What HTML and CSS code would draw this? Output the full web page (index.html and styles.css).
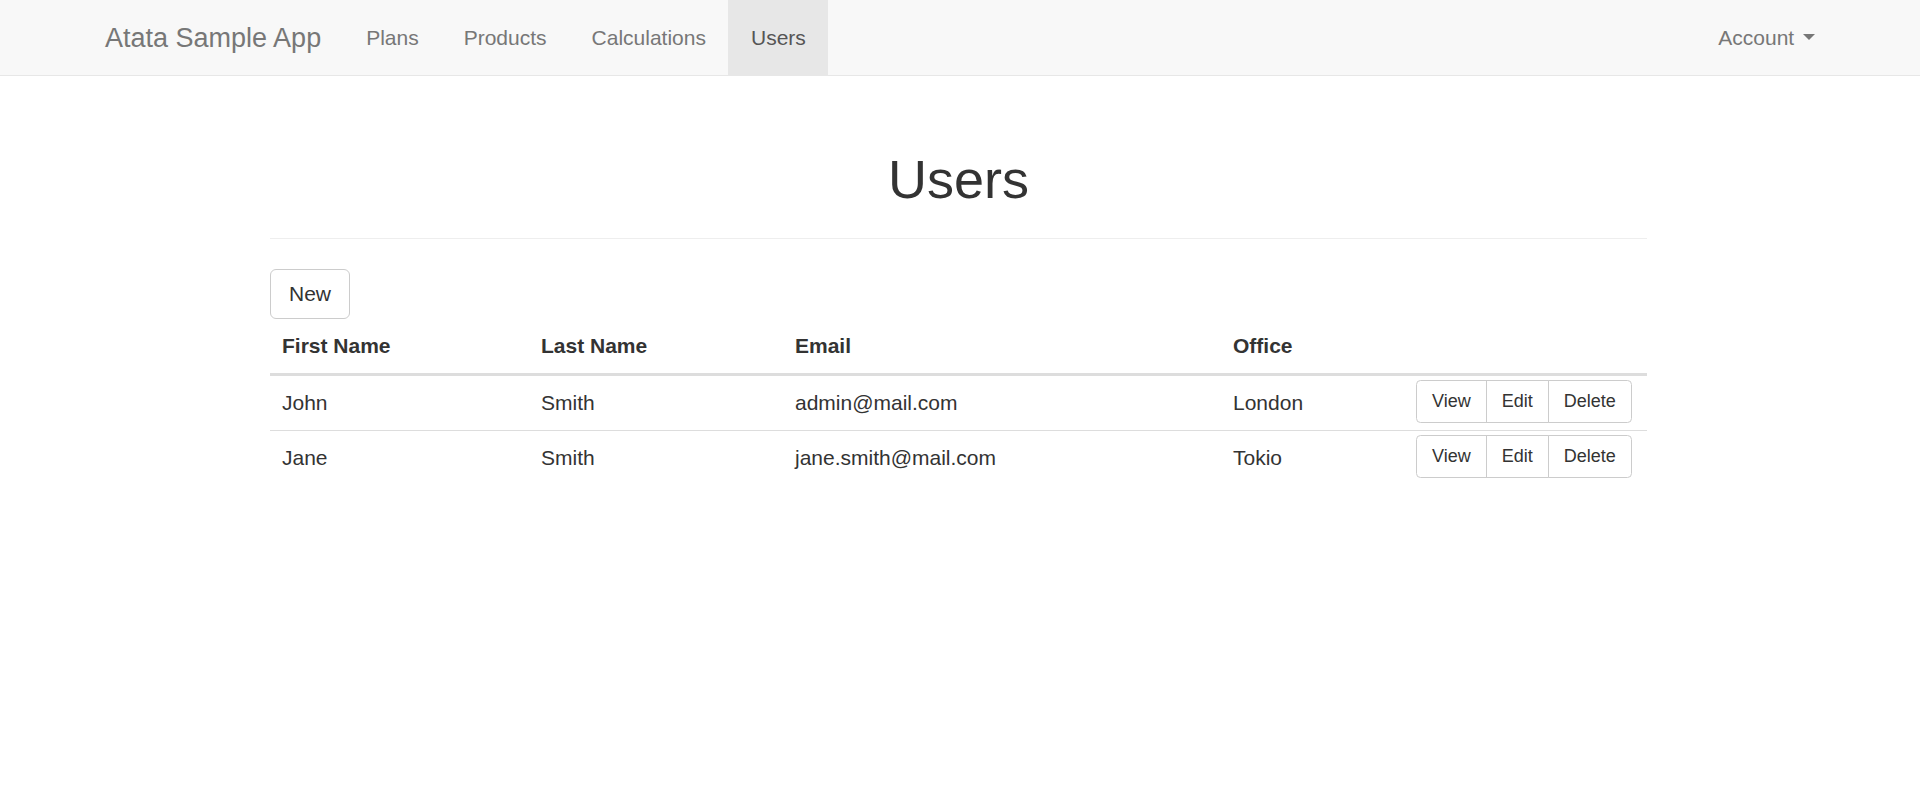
FILE: index.html
```html
<!DOCTYPE html>
<html lang="en">
<head>
<meta charset="utf-8">
<title>Users - Atata Sample App</title>
<link rel="stylesheet" href="styles.css">
</head>
<body>
<nav class="navbar">
  <div class="navbar-container">
    <a class="brand" href="#">Atata Sample App</a>
    <ul class="nav">
      <li><a href="#">Plans</a></li>
      <li><a href="#">Products</a></li>
      <li><a href="#">Calculations</a></li>
      <li class="active"><a href="#">Users</a></li>
    </ul>
    <ul class="nav nav-right">
      <li><a href="#">Account <span class="caret"></span></a></li>
    </ul>
  </div>
</nav>
<main class="content">
  <div class="page-header">
    <h1>Users</h1>
  </div>
  <button class="btn" type="button">New</button>
  <table class="table">
    <colgroup>
      <col class="c1"><col class="c2"><col class="c3"><col class="c4"><col class="c5">
    </colgroup>
    <thead>
      <tr>
        <th>First Name</th>
        <th>Last Name</th>
        <th>Email</th>
        <th>Office</th>
        <th></th>
      </tr>
    </thead>
    <tbody>
      <tr>
        <td>John</td>
        <td>Smith</td>
        <td>admin@mail.com</td>
        <td>London</td>
        <td class="actions">
          <div class="btn-group">
            <button class="btn-sm" type="button">View</button><button class="btn-sm" type="button">Edit</button><button class="btn-sm" type="button">Delete</button>
          </div>
        </td>
      </tr>
      <tr>
        <td>Jane</td>
        <td>Smith</td>
        <td>jane.smith@mail.com</td>
        <td>Tokio</td>
        <td class="actions">
          <div class="btn-group">
            <button class="btn-sm" type="button">View</button><button class="btn-sm" type="button">Edit</button><button class="btn-sm" type="button">Delete</button>
          </div>
        </td>
      </tr>
    </tbody>
  </table>
</main>
</body>
</html>
```
FILE: styles.css
```css
* { box-sizing: border-box; }

html, body {
  margin: 0;
  padding: 0;
  background: #fff;
}

body {
  font-family: "Liberation Sans", Arial, Helvetica, sans-serif;
  font-size: 21px;
  line-height: 30px;
  color: #333;
}

a { text-decoration: none; }

/* Navbar */
.navbar {
  background: #f8f8f8;
  border-bottom: 1px solid #e7e7e7;
  height: 76px;
}

.navbar-container {
  width: 1755px;
  margin: 0 auto;
  padding: 0 22.5px;
  display: flex;
  align-items: flex-start;
}

.brand {
  display: block;
  margin-left: -22.5px;
  padding: 22.5px;
  height: 75px;
  font-size: 27px;
  line-height: 30px;
  color: #777;
  white-space: nowrap;
}

.nav {
  list-style: none;
  margin: 0;
  padding: 0;
  display: flex;
}

.nav li a {
  display: block;
  padding: 22.5px;
  height: 75px;
  line-height: 30px;
  color: #777;
  white-space: nowrap;
}

.nav li.active a {
  background: #e7e7e7;
  color: #555;
}

.nav-right {
  margin-left: auto;
  margin-right: -22.5px;
}

.caret {
  display: inline-block;
  width: 0;
  height: 0;
  margin-left: 3px;
  vertical-align: middle;
  border-top: 6px solid #777;
  border-left: 6px solid transparent;
  border-right: 6px solid transparent;
  position: relative;
  top: -2px;
}

/* Content */
.content {
  width: 1377px;
  margin-left: calc(50% - 690px);
}

.page-header {
  margin-top: 74px;
  padding-bottom: 29px;
  border-bottom: 1px solid #eee;
  margin-bottom: 30px;
}

.page-header h1 {
  margin: 0;
  font-size: 54px;
  line-height: 59px;
  font-weight: 500;
  text-align: center;
  color: #333;
}

.btn {
  display: block;
  height: 50px;
  padding: 9px 18px;
  font-family: inherit;
  font-size: 21px;
  line-height: 30px;
  color: #333;
  background: #fff;
  border: 1px solid #ccc;
  border-radius: 6px;
}

/* Table */
.table {
  width: 1377px;
  table-layout: fixed;
  border-collapse: separate;
  border-spacing: 0;
}

.c1 { width: 259px; }
.c2 { width: 254px; }
.c3 { width: 438px; }
.c4 { width: 183px; }
.c5 { width: 243px; }

.table th,
.table td {
  padding: 12px;
  text-align: left;
  vertical-align: top;
  line-height: 30px;
}

.table th {
  font-weight: bold;
  border-bottom: 3px solid #ddd;
}

.table tbody tr + tr td {
  border-top: 1px solid #ddd;
}

.table td.actions {
  padding: 4px 12px 7px;
}

.btn-group {
  display: inline-flex;
}

.btn-sm {
  display: block;
  height: 43px;
  padding: 7px 15px;
  font-family: inherit;
  font-size: 18px;
  line-height: 27px;
  color: #333;
  background: #fff;
  border: 1px solid #ccc;
  border-radius: 0;
}

.btn-sm + .btn-sm {
  margin-left: -1px;
}

.btn-sm:first-child {
  border-radius: 4.5px 0 0 4.5px;
}

.btn-sm:last-child {
  border-radius: 0 4.5px 4.5px 0;
}
```
